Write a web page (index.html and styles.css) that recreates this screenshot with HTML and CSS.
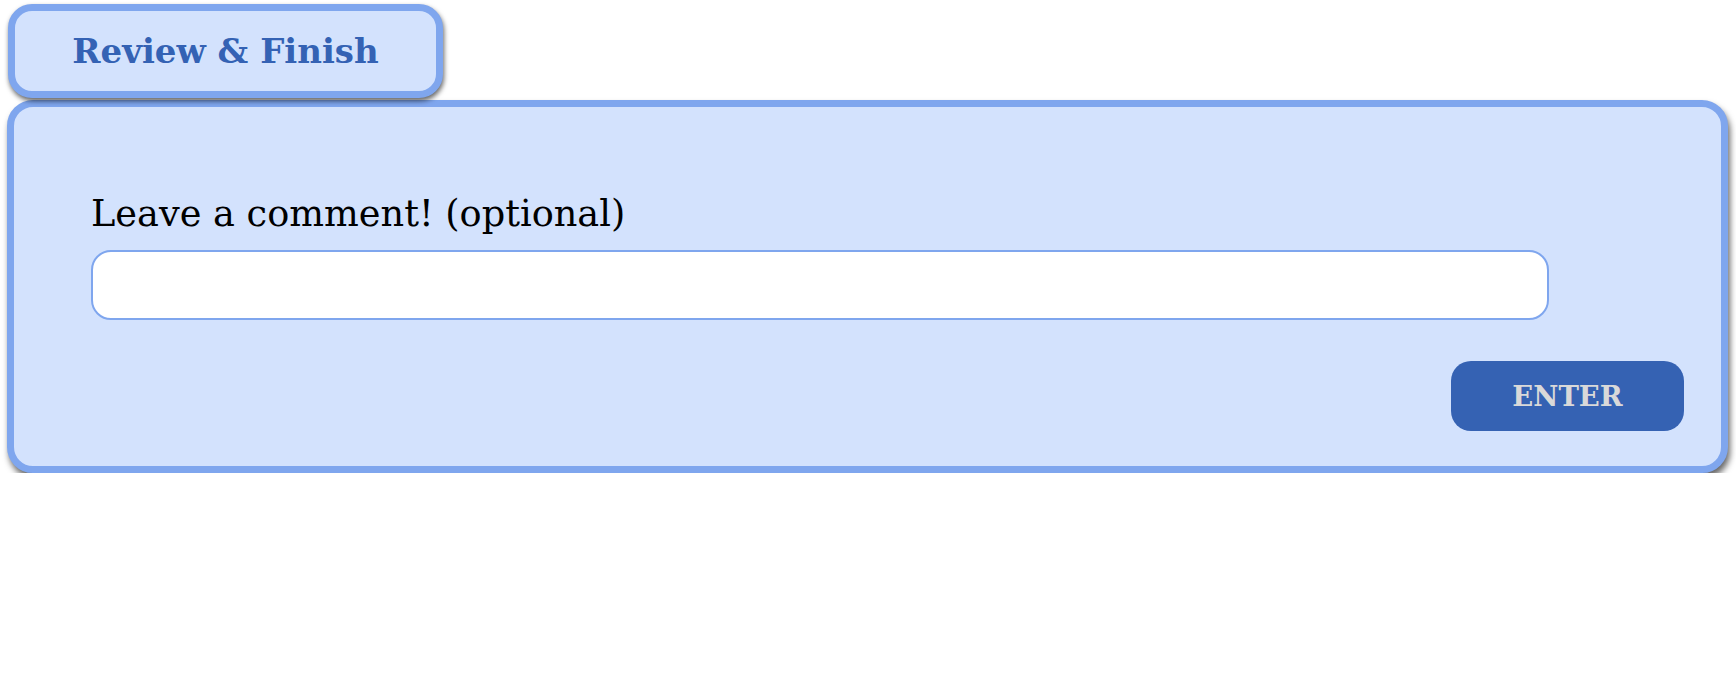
FILE: index.html
```html
<!DOCTYPE html>
<html lang="en">
<head>
<meta charset="utf-8">
<title>Review &amp; Finish</title>
<link rel="stylesheet" href="styles.css">
</head>
<body>
<div class="page">
  <div class="tab">Review &amp; Finish</div>
  <section class="panel">
    <label class="label" for="comment">Leave a comment! (optional)</label>
    <input class="field" id="comment" type="text">
    <div class="actions">
      <button class="enter" type="button">ENTER</button>
    </div>
  </section>
</div>
</body>
</html>
```

FILE: styles.css
```css
html, body {
  margin: 0;
  padding: 0;
  background: #ffffff;
}

body {
  font-family: "DejaVu Serif", "Liberation Serif", serif;
}

.page {
  display: flex;
  flex-direction: column;
  align-items: flex-start;
  padding: 4px 8px 0 7px;
}

.tab {
  box-sizing: border-box;
  width: 435px;
  height: 94px;
  margin-left: 1px;
  display: flex;
  align-items: center;
  justify-content: center;
  background: #d3e2fd;
  border: 7px solid #7fa6ee;
  border-radius: 24px;
  box-shadow: 1px 3px 5px rgba(0, 0, 0, 0.6);
  color: #3462b4;
  font-weight: bold;
  font-size: 34px;
  position: relative;
  z-index: 1;
}

.panel {
  box-sizing: border-box;
  align-self: stretch;
  margin-top: 2px;
  height: 373px;
  background: #d3e2fd;
  border: 7px solid #7fa6ee;
  border-radius: 26px;
  box-shadow: 2px 5px 6px rgba(0, 0, 0, 0.6);
  display: flex;
  flex-direction: column;
  padding: 85px 37px 0 77px;
}

.label {
  font-size: 36.7px;
  line-height: 44px;
  color: #000000;
}

.field {
  box-sizing: border-box;
  width: 1458px;
  height: 70px;
  margin-top: 14px;
  background: #ffffff;
  border: 2.5px solid #7fa6ee;
  border-radius: 20px;
  outline: none;
  padding: 0 16px;
  font: inherit;
  font-size: 24px;
}

.actions {
  display: flex;
  justify-content: flex-end;
  margin-top: 41px;
}

.enter {
  box-sizing: border-box;
  width: 233px;
  height: 70px;
  border: none;
  border-radius: 20px;
  background: #3562b3;
  color: #d9d9d9;
  font-family: "DejaVu Serif", "Liberation Serif", serif;
  font-weight: bold;
  font-size: 27.5px;
  cursor: pointer;
}
```
